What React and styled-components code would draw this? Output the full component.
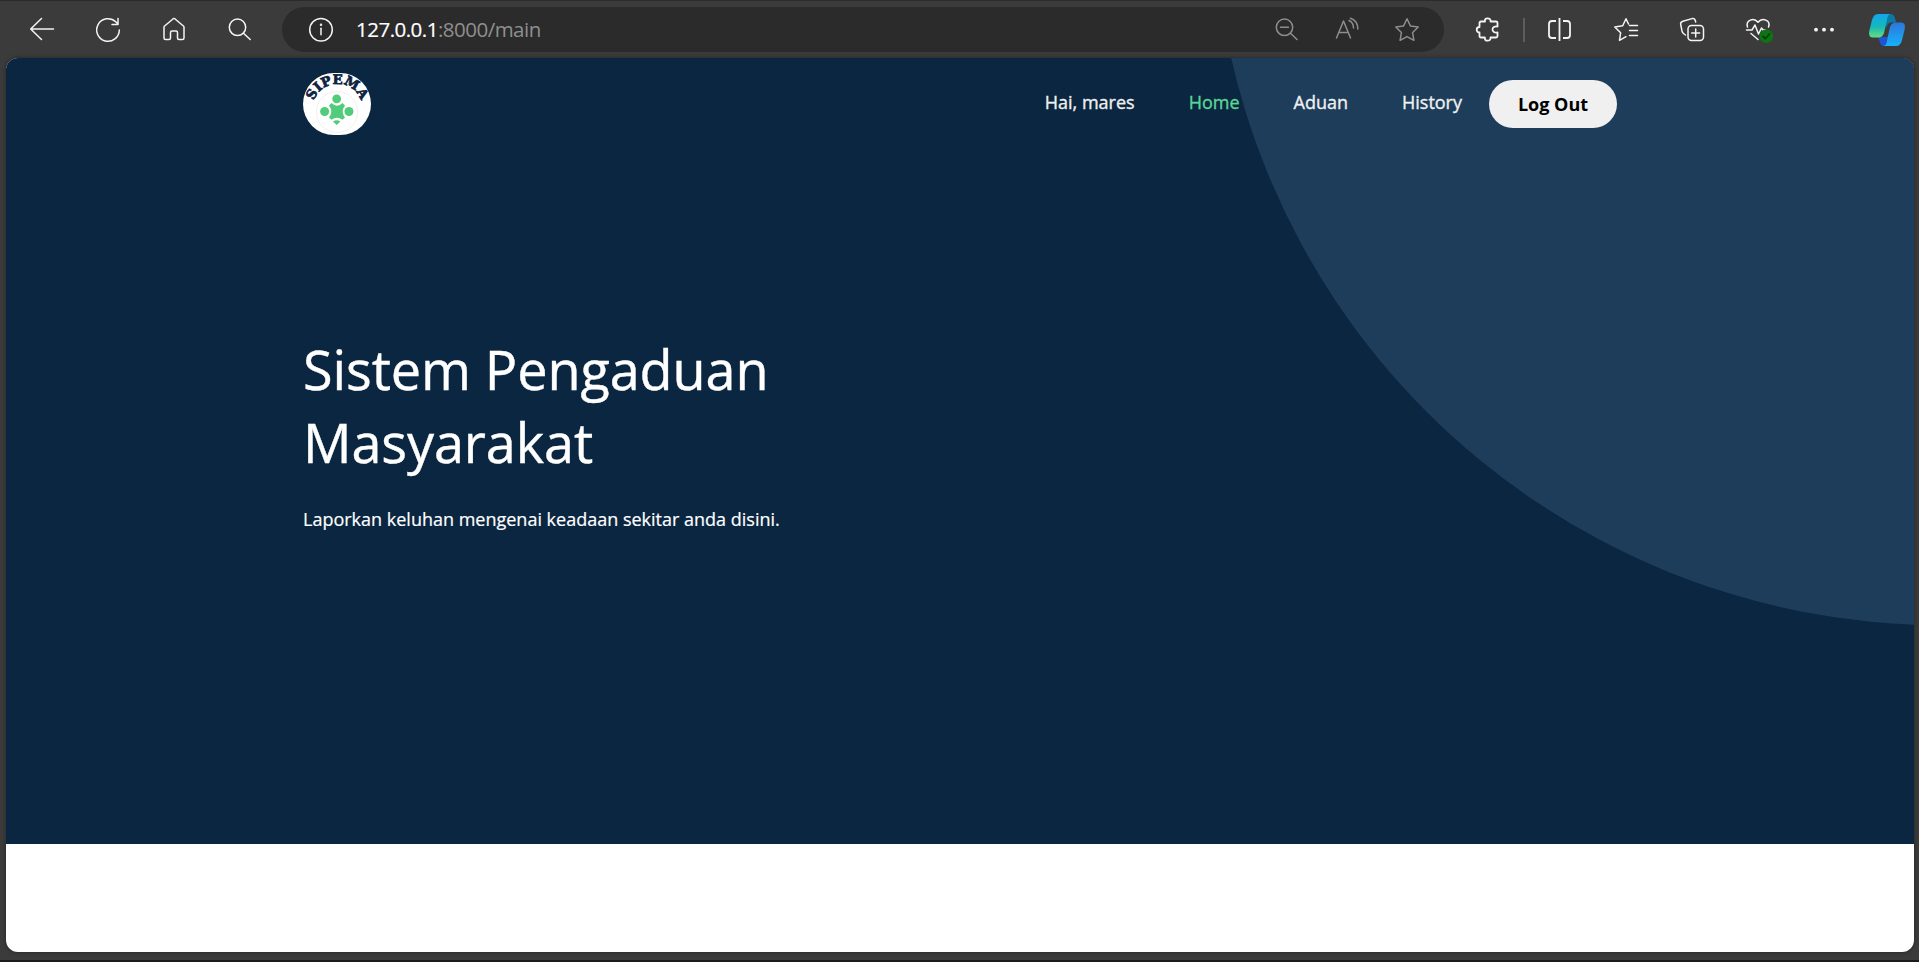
import React from 'react';
import styled, { createGlobalStyle } from 'styled-components';

const Global = createGlobalStyle`
  * { box-sizing: border-box; }
  body { margin: 0; background: #3b3b3b; font-family: "Open Sans", "Noto Sans", sans-serif; overflow: hidden; }
`;

const Window = styled.div`
  height: 962px;
  display: flex;
  flex-direction: column;
  background: #3b3b3b;
  border-top: 1px solid #2b2b2b;
  border-bottom: 2px solid #1b1b1b;
`;

const Toolbar = styled.header`
  height: 57px;
  flex: none;
  display: flex;
  align-items: center;
  padding: 0 13px 0 30px;
`;

const Icon = styled.svg`
  display: block;
  flex: none;
  width: ${(p) => p.$width || 24}px;
  height: ${(p) => p.$height || 24}px;
  margin-left: ${(p) => p.$gap || 0}px;
  overflow: visible;
  fill: none;
  stroke: ${(p) => (p.$dim ? '#8e8e8e' : '#f4f4f4')};
  stroke-width: 1.5;
  stroke-linecap: round;
  stroke-linejoin: round;
`;

const AddressBar = styled.div`
  flex: none;
  width: 1162px;
  height: 45px;
  margin-left: 30px;
  padding: 0 25px 0 27px;
  border-radius: 23px;
  background: #2b2b2b;
  display: flex;
  align-items: center;
`;

const Url = styled.div`
  flex: 1;
  margin-left: 23px;
  padding-bottom: 2px;
  font: 20.5px/28px "Open Sans", sans-serif;
  color: #8f8f8f;
  letter-spacing: -0.51px;
`;

const Host = styled.span`
  color: #fff;
  -webkit-text-stroke: 0.2px #fff;
`;

const Divider = styled.div`
  flex: none;
  width: 2px;
  height: 24px;
  margin-left: 23px;
  background: #5d5d5d;
`;

const Page = styled.main`
  flex: none;
  width: 1908px;
  height: 894px;
  margin-left: 6px;
  border-radius: 12px;
  overflow: hidden;
  background: #fff;
  box-shadow: 0 0 4px rgba(0, 0, 0, 0.4);
`;

const Hero = styled.section`
  position: relative;
  height: 786px;
  background: #0b2641;
  overflow: hidden;
`;

const Backdrop = styled.svg`
  position: absolute;
  inset: 0;
  width: 100%;
  height: 100%;
`;

const Container = styled.div`
  position: relative;
  width: 1314px;
  margin-left: 297px;
`;

const Navbar = styled.nav`
  height: 91px;
  display: flex;
  align-items: center;
`;

const Logo = styled.svg`
  display: block;
  width: 68px;
  height: 62px;
  margin-right: auto;
  overflow: visible;
`;

const NavLink = styled.a`
  font-size: 18px;
  font-weight: 500;
  line-height: 28px;
  color: ${(p) => (p.$active ? '#5ad796' : '#f0f0f0')};
  -webkit-text-stroke: 0.35px currentColor;
  margin: 0 27px 4px;
`;

const LogOut = styled.button`
  width: 128px;
  height: 48px;
  border: 0;
  border-radius: 24px;
  background: #f0f0f0;
  color: #000;
  font: 700 18px/24px "Open Sans", sans-serif;
  padding: 1px 0 0;
`;

const Title = styled.h1`
  width: 560px;
  margin: 184px 0 0;
  font-size: 54px;
  line-height: 73px;
  font-weight: 400;
  letter-spacing: -0.1px;
  color: #fff;
  -webkit-text-stroke: 0.4px #fff;
`;

const Lead = styled.p`
  margin: 26px 0 0;
  font-size: 18px;
  line-height: 28px;
  color: #fff;
  -webkit-text-stroke: 0.2px #fff;
`;

function Sipema() {
  return (
    <Logo viewBox="0 0 68 62">
      <defs>
        <path id="arc" d="M9.300 36 A25 25 0 0 1 59.300 36" />
      </defs>
      <rect width="68" height="62" rx="31" ry="31" fill="#fff" />
      <circle cx="34" cy="39" r="20.5" fill="#fff" stroke="#f5eff0" strokeWidth="1" />
      <text fontFamily="DejaVu Serif, serif" fontWeight="700" fontSize="13.3" fill="#0e2340" stroke="#0e2340" strokeWidth=".7" textAnchor="middle">
        <textPath href="#arc" startOffset="50%">SIPEMA</textPath>
      </text>
      <path fill="#51cc7a" d="M28.500 30 Q34 35.500 39.500 30 L42 32.500 Q37.500 38.500 42 44.500 L39.500 46.800 Q34 42.500 28.500 46.800 L26 44.500 Q30.500 38.500 26 32.500Z" />
      <g fill="#51cc7a">
        <circle cx="33.7" cy="25.8" r="4.4" />
        <circle cx="21.6" cy="38.5" r="4.5" />
        <circle cx="46" cy="38.5" r="4.5" />
        <path d="M30 48.500 Q33.700 46 37.400 48.500 L33.700 52Z" />
      </g>
    </Logo>
  );
}

function Copilot() {
  return (
    <Icon $gap={33} $width={36} $height={32} viewBox="0 0 36 32">
      <defs>
        <linearGradient id="ca" x1="0" y1="0" x2="0" y2="1">
          <stop offset="0" stopColor="#12a5ee" /><stop offset=".55" stopColor="#16b8b8" /><stop offset="1" stopColor="#67dd7c" />
        </linearGradient>
        <linearGradient id="cb" x1="0" y1="0" x2="0" y2="1">
          <stop offset="0" stopColor="#2e75dc" /><stop offset="1" stopColor="#16b2fb" />
        </linearGradient>
      </defs>
      <g stroke="none">
        <path fill="#087aa4" d="M16 0 H21 C25 0 26 3 27 8.600 H23 C19 8.600 18 11 17 15Z" />
        <path fill="#1c55dc" d="M9 23 H19 L16 32 H15 C11 32 11 27 9 23Z" />
        <path fill="url(#ca)" d="M9 0 H22 C19 0 18.500 3 17.800 7 L15 19 C14 22 12 23.500 9 23.500 H4 C0 23.500 -.5 20 .5 16 L3 6 C4 2 6 0 9 0Z" />
        <path fill="url(#cb)" d="M27 32 H14 C17 32 17.500 29 18.300 25 L21 13 C22 10 24 8.500 27 8.500 H32 C36 8.500 36.500 12 35.500 16 L33 26 C32 30 30 32 27 32Z" />
      </g>
    </Icon>
  );
}

function BrowserToolbar() {
  return (
    <Toolbar>
      <Icon viewBox="0 0 24 24"><path d="M23.500 11H.7M11.500 .5L.7 11l10.800 10.500" /></Icon>
      <Icon $gap={42} viewBox="0 0 24 24"><path d="M23.300 12A11.300 11.300 0 1 1 19.700 3.700L22 6M22 .5V6.500H16" /></Icon>
      <Icon $gap={42} viewBox="0 0 24 24"><path d="M2 9.300Q2 8.500 2.600 8L11.200 .7Q12 .1 12.800 .7L21.400 8Q22 8.500 22 9.300V20Q22 21.500 20.500 21.500H17Q15.500 21.500 15.500 20V14.500Q15.500 13 14 13H10Q8.500 13 8.500 14.500V20Q8.500 21.500 7 21.500H3.500Q2 21.500 2 20Z" /></Icon>
      <Icon $gap={42} viewBox="0 0 24 24"><circle cx="9.500" cy="9.300" r="8.200" /><path d="M15.500 15.300L22.200 21.500" /></Icon>
      <AddressBar>
        <Icon viewBox="0 0 24 24"><circle cx="12" cy="11.700" r="11.300" /><path d="M12 10.200V16.700" /><circle cx="12" cy="6.700" r=".5" /></Icon>
        <Url><Host>127.0.0.1</Host>:8000/main</Url>
        <Icon $dim viewBox="0 0 24 24"><circle cx="9.500" cy="9.300" r="8.200" /><path d="M15.500 15.300L22 21.500M5.500 9.300h8" /></Icon>
        <Icon $dim $gap={36} viewBox="0 0 24 24"><path d="M1.500 20L8.500 3L15.500 20M4 14.500h9M14 2.500Q18.500 4.500 18.500 10M15.500 .2Q23 3 22.800 11" /></Icon>
        <Icon $dim $gap={36} viewBox="0 0 24 24"><path d="M12 .8L15.400 7.900L23.200 9L17.600 14.500L18.900 22.300L12 18.600L5.100 22.300L6.400 14.500L.8 9L8.600 7.900Z" /></Icon>
      </AddressBar>
      <Icon $gap={32} viewBox="0 0 24 24"><path strokeWidth="1.800" d="M5 3.500H9C8.500 1.500 9.500 .3 11.500 .3S15 1.500 14.500 3.500H20Q21.500 3.500 21.500 5V8.500C18.500 8 16.500 9.500 16.500 11.500S18.500 15 21.500 14.500V18Q21.500 19.500 20 19.500H14.500C15 21.500 13.500 22.700 11.500 22.700S8.500 21.500 9 19.500H5Q3.500 19.500 3.500 18V14.500C2 14.500 .7 13.500 .7 11.700S2 9 3.500 9V5Q3.500 3.500 5 3.500Z" /></Icon>
      <Divider />
      <Icon $gap={22} viewBox="0 0 24 24"><path strokeWidth="1.800" strokeLinecap="butt" d="M12.500 0v23M9 3H5Q2 3 2 6V17Q2 20 5 20H9M16 3H20Q23 3 23 6V17Q23 20 20 20H16" /></Icon>
      <Icon $gap={43} viewBox="0 0 24 24"><path d="M15.500 7.500H23.500M15.500 12.500H23.500M15.500 17.500H23.500M12 18.700L5.500 22.300L6.600 14.800L.8 9L8.700 7.800L12 .7L14.500 6" /></Icon>
      <Icon $gap={42} viewBox="0 0 24 24"><rect x="8" y="7.500" width="15.500" height="15" rx="3.500" /><path d="M15.700 11v8M11.700 15h8M5.500 17L3.500 15.500Q2.500 14.700 2 13L.7 6.500Q.2 4.100 2.800 3.300L12 .6Q14.500 0 15.200 2.300L15.700 4" /></Icon>
      <Icon $gap={42} viewBox="0 0 24 24"><path d="M1.500 9C-.5 2.500 7.500-1.400 12 4.300C16.500-1.400 25 2.500 22.500 9M.5 12H6L9 7L12.500 16L15.500 10L17 12H19M5 15.500L12 21.500" /><circle cx="20.300" cy="18.200" r="6.800" fill="#0c7412" stroke="none" /><path stroke="#063d08" d="M17 18.400L19.300 20.700L23.500 16.100" /></Icon>
      <Icon $gap={42} viewBox="0 0 24 24"><g fill="#f4f4f4" stroke="none"><circle cx="4" cy="11.700" r="1.900" /><circle cx="12" cy="11.700" r="1.900" /><circle cx="20" cy="11.700" r="1.900" /></g></Icon>
      <Copilot />
    </Toolbar>
  );
}

export default function App() {
  return (
    <Window>
      <Global />
      <BrowserToolbar />
      <Page>
        <Hero>
          <Backdrop viewBox="0 0 1908 786"><circle cx="1936" cy="-161.800" r="729" fill="#1d3d5b" /></Backdrop>
          <Container>
            <Navbar>
              <Sipema />
              <NavLink>Hai, mares</NavLink>
              <NavLink $active>Home</NavLink>
              <NavLink>Aduan</NavLink>
              <NavLink>History</NavLink>
              <LogOut>Log Out</LogOut>
            </Navbar>
            <Title>Sistem Pengaduan<br />Masyarakat</Title>
            <Lead>Laporkan keluhan mengenai keadaan sekitar anda disini.</Lead>
          </Container>
        </Hero>
      </Page>
    </Window>
  );
}
